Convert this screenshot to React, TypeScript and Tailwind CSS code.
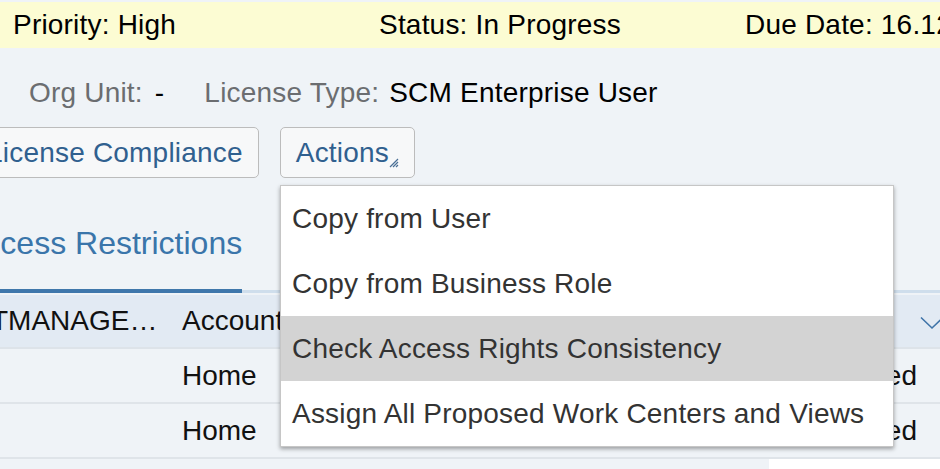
import React from 'react'

const items = [
  'Copy from User',
  'Copy from Business Role',
  'Check Access Rights Consistency',
  'Assign All Proposed Work Centers and Views',
]

const rows = [
  { a: 'Home', b: 'Assigned' },
  { a: 'Home', b: 'Assigned' },
]

export default function App() {
  return (
    <div className="relative w-[940px] h-[469px] overflow-hidden bg-[#eff3f7] font-['Liberation_Sans',Arial,sans-serif] text-[28px] leading-[32px] tracking-[0.2px] whitespace-nowrap">
      <div className="h-[2px]" />

      {/* header banner */}
      <div className="h-[46px] flex items-center bg-[#fcfcd3] text-black pl-[13px]">
        <div className="w-[366px] shrink-0">Priority: High</div>
        <div className="w-[366px] shrink-0">Status: In Progress</div>
        <div className="shrink-0">Due Date: 16.12.2016</div>
      </div>

      <div className="h-[48px] mt-[21px] flex items-center pl-[29px]">
        <span className="text-[#6b6d70]">Org Unit:</span>
        <span className="ml-[12px] text-black">-</span>
        <span className="ml-[40px] text-[#6b6d70]">License Type:</span>
        <span className="ml-[10px] text-black">SCM Enterprise User</span>
      </div>

      {/* buttons */}
      <div className="h-[51px] mt-[10px] flex gap-[21px]">
        <button className="ml-[-29px] h-full px-[15px] rounded-[5px] border border-[#bcbcbc] bg-[#f7f8f9] text-[#30608f]">
          License Compliance
        </button>
        <button className="h-full pl-[15px] pr-[15px] rounded-[5px] border border-[#bcbcbc] bg-[#f7f8f9] text-[#30608f] flex items-center">
          <span>Actions</span>
          <svg width="10" height="10" viewBox="0 0 10 10" className="self-end mb-[9px]">
            <path d="M9 1 L1 9 M9 4 L4 9 M9 7 L7 9" stroke="#4a6f95" strokeWidth="1.2" fill="none" />
          </svg>
        </button>
      </div>

      {/* tab */}
      <div className="pt-[47px] pb-[28px]">
        <div className="ml-[-37px] text-[32px] leading-[36px] tracking-normal text-[#3a75aa]">Access Restrictions</div>
      </div>
      <div className="h-[4px] flex">
        <div className="w-[242px] bg-[#3f77ab]" />
        <div className="flex-1 mt-[1px] bg-[#cfdeec]" />
      </div>

      {/* table */}
      <div className="mt-[2px] tracking-normal">
        <div className="h-[54px] flex items-center bg-[#e2eaf3] border-b-2 border-[#dde3e9] text-[#111]">
          <div className="w-[182px] shrink-0">
            <span className="ml-[-9px]">TMANAGE…</span>
          </div>
          <div>Account</div>
          <div className="flex-1" />
          <svg width="24" height="14" viewBox="0 0 24 14" className="mr-[-4px] mt-[4px]">
            <path d="M1 1.5 L12 12 L23 1.5" stroke="#3f74a8" strokeWidth="1.6" fill="none" />
          </svg>
        </div>
        {rows.map((r, i) => (
          <div key={i} className="h-[55px] flex items-center border-b-2 border-[#dfe4e9] text-[#111]">
            <div className="w-[182px] shrink-0" />
            <div>{r.a}</div>
            <div className="flex-1 text-right pr-[23px]">{r.b}</div>
          </div>
        ))}
        <div className="h-[10px] flex">
          <div className="w-[769px]" />
          <div className="flex-1 bg-white" />
        </div>
      </div>

      {/* dropdown menu */}
      <div className="absolute left-[280px] top-[185px] w-[614px] bg-white border border-[#c6c6c6] shadow-[0_2px_4px_rgba(0,0,0,0.35)]">
        {items.map((t, i) => (
          <div
            key={t}
            className={`h-[65px] flex items-center pl-[11px] text-[#333] ${i === 2 ? 'bg-[#d3d3d3]' : ''}`}
          >
            {t}
          </div>
        ))}
      </div>
    </div>
  )
}
